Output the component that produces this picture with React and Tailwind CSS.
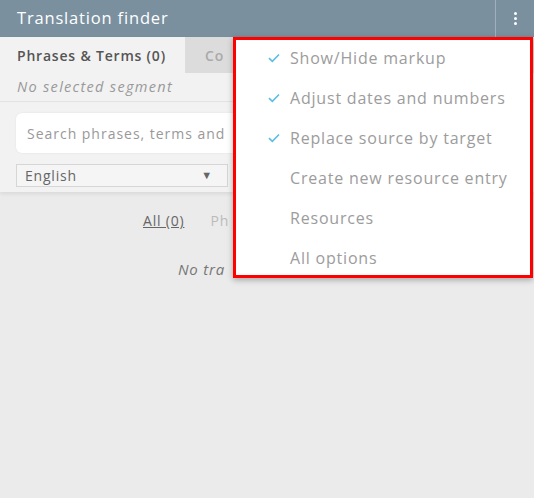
import React from "react";

const Check = () => (
  <svg width="12" height="10" viewBox="0 0 12 10" className="shrink-0">
    <path d="M1 5.2 L4.3 8.3 L11 1.5" fill="none" stroke="#5bbde6" strokeWidth="1.6" />
  </svg>
);

const items = [
  ["Show/Hide markup", true],
  ["Adjust dates and numbers", true],
  ["Replace source by target", true],
  ["Create new resource entry", false],
  ["Resources", false],
  ["All options", false],
];

export default function App() {
  return (
    <div
      className="relative w-[534px] h-[498px] bg-[#ebebeb] overflow-hidden tracking-[0.05em]"
      style={{ fontFamily: '"Open Sans", "Noto Sans", sans-serif' }}
    >
      <div className="h-[37px] bg-[#7a909f] flex items-center">
        <div className="flex-1 pl-[17px] text-white text-[16.5px] tracking-[0.05em]">Translation finder</div>
        <div className="w-px h-[37px] bg-[#9fb0bc]" />
        <div className="w-[38px] flex flex-col items-center justify-center gap-[2px]">
          <span className="w-[3px] h-[3px] rounded-full bg-white" />
          <span className="w-[3px] h-[3px] rounded-full bg-white" />
          <span className="w-[3px] h-[3px] rounded-full bg-white" />
        </div>
      </div>
      <div className="bg-[#f2f2f2] shadow-[0_2px_4px_rgba(0,0,0,0.08)]">
        <div className="flex h-[36px]">
          <div className="w-[185px] flex items-center pl-[17px] text-[14px] font-semibold text-[#555]">
            Phrases &amp; Terms (0)
          </div>
          <div className="flex-1 bg-[#dcdcdc] flex items-center pl-[20px] text-[14px] font-semibold text-[#aaa]">
            Co
          </div>
        </div>
        <div className="h-[29px] flex items-center pl-[17px] text-[14.5px] italic text-[#999] tracking-[0.09em] border-b border-[#e2e2e2]">
          No selected segment
        </div>
        <div className="px-[16px] pt-[11px] pb-[5px]">
          <div className="h-[40px] bg-white rounded-[6px] flex items-center pl-[11px] text-[14px] text-[#999] tracking-[0.07em] shadow-[0_0_2px_rgba(0,0,0,0.08)]">
            Search phrases, terms and
          </div>
          <div className="flex gap-3 mt-[11px]">
            <div className="w-[212px] h-[23px] border border-[#d6d6d6] bg-[#f5f5f5] flex items-center pl-[8px] pr-[14px] text-[14px] text-[#666]">
              <span className="flex-1">English</span>
              <span className="text-[11px] text-[#666]">▼</span>
            </div>
          </div>
        </div>
      </div>
      <div className="flex gap-[26px] pl-[143px] pt-[18px] text-[14px]">
        <span className="underline text-[#666]">All (0)</span>
        <span className="text-[#bbb]">Ph</span>
      </div>
      <div className="pl-[178px] pt-[27px] text-[15px] italic text-[#777]">No tra</div>

      <div className="absolute left-[233px] top-[37px] w-[300px] h-[241px] bg-white border-[3px] border-[#ff0000] shadow-[0_2px_6px_rgba(0,0,0,0.3)]">
        {items.map(([label, checked]) => (
          <div key={label} className="h-[40px] first:-mt-[2px] flex items-center pl-[32px] text-[16px] text-[#9c9c9c]">
            <span className="w-[22px] flex items-center">{checked && <Check />}</span>
            <span>{label}</span>
          </div>
        ))}
      </div>
    </div>
  );
}
